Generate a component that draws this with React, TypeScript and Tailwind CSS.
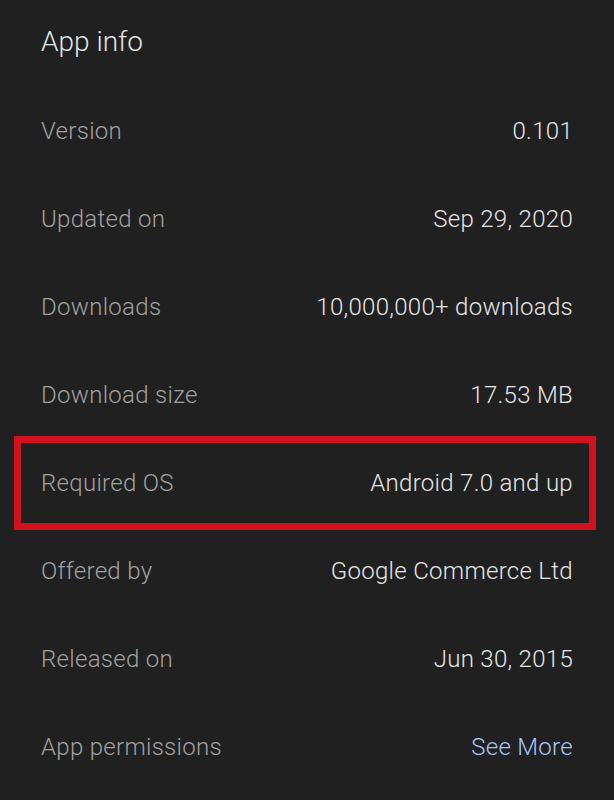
const rows: { label: string; value: string; link?: boolean; marked?: boolean }[] = [
  { label: 'Version', value: '0.101' },
  { label: 'Updated on', value: 'Sep 29, 2020' },
  { label: 'Downloads', value: '10,000,000+ downloads' },
  { label: 'Download size', value: '17.53 MB' },
  { label: 'Required OS', value: 'Android 7.0 and up', marked: true },
  { label: 'Offered by', value: 'Google Commerce Ltd' },
  { label: 'Released on', value: 'Jun 30, 2015' },
  { label: 'App permissions', value: 'See More', link: true },
];

export default function App() {
  return (
    <div className="h-[800px] w-[614px] overflow-hidden bg-[#202020] px-[41px] font-['Roboto',sans-serif] font-light">
      <h1 className="flex h-[87px] items-center pb-[3px] text-[28px] text-[#e3e3e3]">App info</h1>
      {rows.map(row => (
        <div key={row.label} className="relative flex h-[88px] items-center justify-between text-[24px] tracking-[0.3px]">
          <span className="text-[#a0a0a0]">{row.label}</span>
          <span className={row.link ? 'text-[#a8c7fa]' : 'text-[#e6e6e6]'}>{row.value}</span>
          {row.marked && (
            <div className="pointer-events-none absolute -top-[3px] -bottom-[3px] -left-[27px] -right-[23px] border-[7px] border-[#d0121f]" />
          )}
        </div>
      ))}
    </div>
  );
}
